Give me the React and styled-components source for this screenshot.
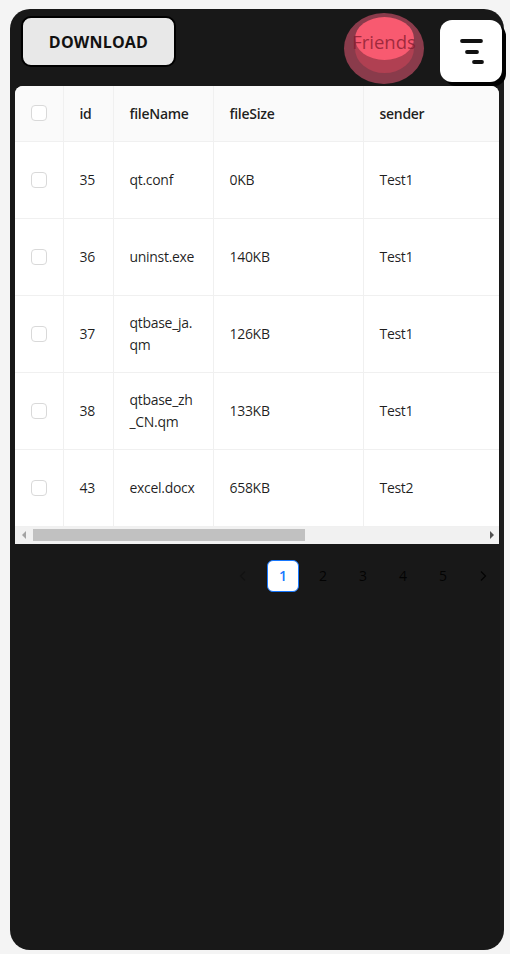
import styled, { createGlobalStyle } from "styled-components";

const GlobalStyle = createGlobalStyle`
  body {
    margin: 0;
    background: #f4f4f4;
    font-family: "Open Sans", "Noto Sans", sans-serif;
  }
`;

const Panel = styled.div`
  margin: 9px 6px 4px 10px;
  height: 941px;
  background: #181818;
  border-radius: 20px;
  display: flex;
  flex-direction: column;
`;

const TopBar = styled.div`
  height: 77px;
  display: flex;
  align-items: flex-start;
  padding-left: 11px;
`;

const DownloadButton = styled.button`
  margin-top: 7px;
  width: 155px;
  height: 51px;
  background: #e8e8e8;
  border: 2px solid #000;
  border-radius: 10px;
  font-family: "Open Sans", sans-serif;
  font-weight: 700;
  font-size: 16px;
  color: #111;
  letter-spacing: 0.2px;
`;

const Friends = styled.div`
  position: relative;
  margin-left: auto;
  margin-top: 4px;
  width: 80px;
  height: 71px;
  border-radius: 50%;
  background: #8a3b4b;
`;

const FriendsEdge = styled.div`
  position: absolute;
  left: 11px;
  top: 11px;
  width: 59px;
  height: 49px;
  border-radius: 50%;
  background: #b04052;
`;

const FriendsFront = styled.div`
  position: absolute;
  left: 11px;
  top: 4px;
  width: 59px;
  height: 43px;
  border-radius: 50%;
  background: #f85a70;
`;

const FriendsLabel = styled.span`
  position: absolute;
  left: 0;
  right: 0;
  top: 18px;
  text-align: center;
  font-size: 18.5px;
  line-height: 22px;
  color: rgba(130, 25, 45, 0.75);
  white-space: nowrap;
`;

const MenuButton = styled.button`
  margin: 11px 2px 0 16px;
  width: 62px;
  height: 62px;
  background: #fff;
  border: none;
  border-radius: 12px;
  box-shadow: 4px 4px 0 #000;
  display: flex;
  align-items: center;
  justify-content: center;
  padding: 0;
`;

const TableWrap = styled.div`
  margin: 0 5px;
  background: #fff;
  border-radius: 8px 8px 0 0;
  overflow: hidden;
`;

const Table = styled.table`
  width: 700px;
  table-layout: fixed;
  border-collapse: collapse;
  font-size: 14px;
  letter-spacing: -0.3px;
  color: rgba(0, 0, 0, 0.88);
`;

const Th = styled.th`
  width: ${(p) => p.w}px;
  height: 55px;
  box-sizing: border-box;
  padding: 0 16px;
  text-align: left;
  font-weight: 600;
  background: #fafafa;
  border-right: 1px solid #f0f0f0;
  border-bottom: 1px solid #f0f0f0;
`;

const Td = styled.td`
  height: 77px;
  box-sizing: border-box;
  padding: 0 16px;
  line-height: 22px;
  word-break: break-all;
  border-right: 1px solid #f0f0f0;
  border-bottom: 1px solid #f0f0f0;
`;

const Check = styled.span`
  display: block;
  width: 16px;
  height: 16px;
  box-sizing: border-box;
  border: 1px solid #d9d9d9;
  border-radius: 4px;
  background: #fff;
`;

const ScrollTrack = styled.div`
  height: 17px;
  background: #f1f1f1;
  display: flex;
  align-items: center;
  padding: 0 5px 0 7px;
  gap: 7px;
`;

const ScrollThumb = styled.div`
  width: 272px;
  height: 12px;
  background: #c1c1c1;
  margin-right: auto;
`;

const Arrow = styled.span`
  width: 0;
  height: 0;
  border-top: 4px solid transparent;
  border-bottom: 4px solid transparent;
  ${(p) =>
    p.dir === "left"
      ? "border-right: 4px solid #a3a3a3;"
      : "border-left: 4px solid #505050;"}
`;

const Pager = styled.ul`
  list-style: none;
  margin: 16px 5px 0 0;
  padding: 0;
  display: flex;
  justify-content: flex-end;
  gap: 8px;
`;

const PageItem = styled.li`
  width: 32px;
  height: 32px;
  box-sizing: border-box;
  display: flex;
  align-items: center;
  justify-content: center;
  font-size: 14px;
  border-radius: 6px;
  color: ${(p) => (p.active ? "#1677ff" : "rgba(0,0,0,0.88)")};
  background: ${(p) => (p.active ? "#fff" : "transparent")};
  border: ${(p) => (p.active ? "1px solid #1677ff" : "none")};
  font-weight: ${(p) => (p.active ? 600 : 400)};
`;

const rows = [
  { id: 35, name: "qt.conf", size: "0KB", sender: "Test1" },
  { id: 36, name: "uninst.exe", size: "140KB", sender: "Test1" },
  { id: 37, name: "qtbase_ja.qm", size: "126KB", sender: "Test1" },
  { id: 38, name: "qtbase_zh_CN.qm", size: "133KB", sender: "Test1" },
  { id: 43, name: "excel.docx", size: "658KB", sender: "Test2" },
];

const MenuIcon = () => (
  <svg width="30" height="30" viewBox="0 0 30 30">
    <g stroke="#111" strokeWidth="3.8" strokeLinecap="round">
      <line x1="6" y1="5" x2="25" y2="5" />
      <line x1="11" y1="16" x2="21" y2="16" />
      <line x1="18" y1="26" x2="26" y2="26" />
    </g>
  </svg>
);

const Chevron = ({ left, color }) => (
  <svg width="12" height="12" viewBox="0 0 12 12">
    <path
      d={left ? "M8 1.5 L3.5 6 L8 10.5" : "M4 1.5 L8.5 6 L4 10.5"}
      fill="none"
      stroke={color}
      strokeWidth="1.3"
    />
  </svg>
);

export default function App() {
  return (
    <>
      <GlobalStyle />
      <Panel>
        <TopBar>
          <DownloadButton>DOWNLOAD</DownloadButton>
          <Friends>
            <FriendsEdge />
            <FriendsFront />
            <FriendsLabel>Friends</FriendsLabel>
          </Friends>
          <MenuButton>
            <MenuIcon />
          </MenuButton>
        </TopBar>
        <TableWrap>
          <Table>
            <thead>
              <tr>
                <Th w={48}>
                  <Check />
                </Th>
                <Th w={50}>id</Th>
                <Th w={100}>fileName</Th>
                <Th w={150}>fileSize</Th>
                <Th w={150}>sender</Th>
                <Th w={202}></Th>
              </tr>
            </thead>
            <tbody>
              {rows.map((r) => (
                <tr key={r.id}>
                  <Td>
                    <Check />
                  </Td>
                  <Td>{r.id}</Td>
                  <Td>{r.name}</Td>
                  <Td>{r.size}</Td>
                  <Td>{r.sender}</Td>
                  <Td></Td>
                </tr>
              ))}
            </tbody>
          </Table>
          <ScrollTrack>
            <Arrow dir="left" />
            <ScrollThumb />
            <Arrow dir="right" />
          </ScrollTrack>
        </TableWrap>
        <Pager>
          <PageItem>
            <Chevron left color="rgba(0,0,0,0.25)" />
          </PageItem>
          <PageItem active>1</PageItem>
          <PageItem>2</PageItem>
          <PageItem>3</PageItem>
          <PageItem>4</PageItem>
          <PageItem>5</PageItem>
          <PageItem>
            <Chevron color="rgba(0,0,0,0.88)" />
          </PageItem>
        </Pager>
      </Panel>
    </>
  );
}
